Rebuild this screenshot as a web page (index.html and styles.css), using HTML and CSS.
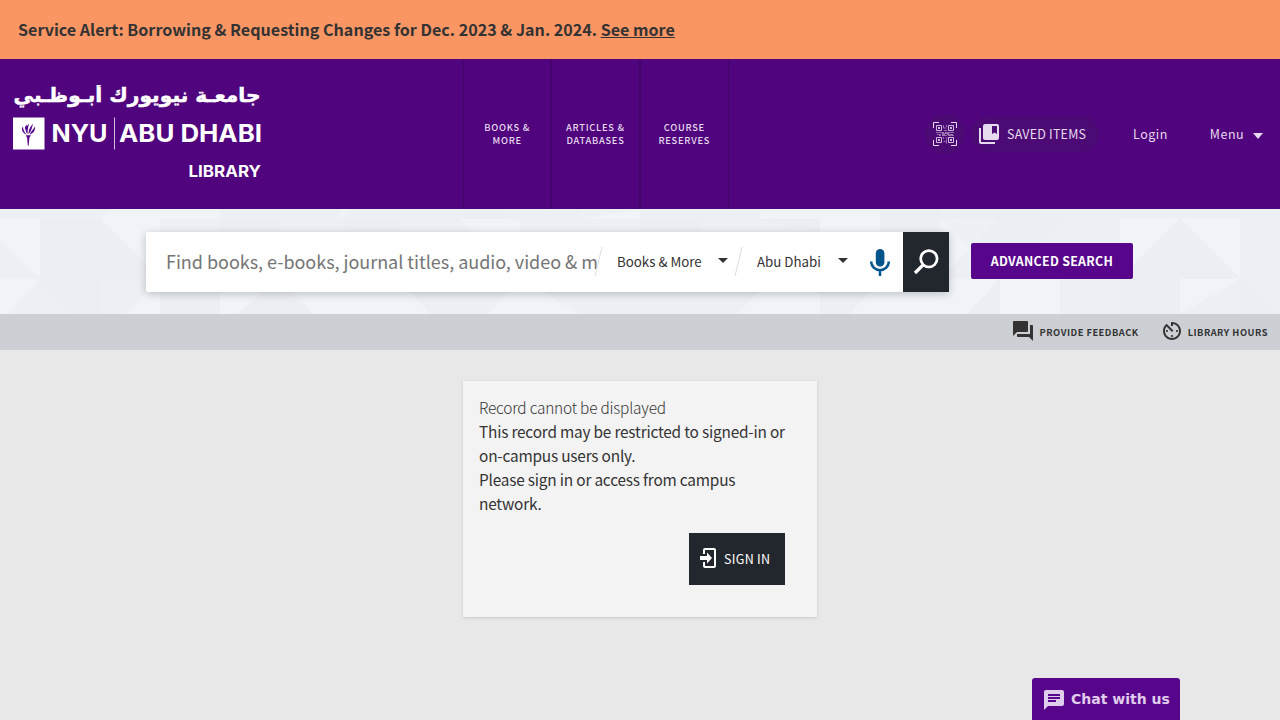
FILE: index.html
```html
<!DOCTYPE html>
<html lang="en">
<head>
<meta charset="utf-8">
<title>NYU Abu Dhabi Library</title>
<link rel="stylesheet" href="styles.css">
</head>
<body>
<div class="alert"><span>Service Alert: Borrowing &amp; Requesting Changes for Dec. 2023 &amp; Jan. 2024. <a href="#">See more</a></span></div>
<header class="header">
  <a class="logo" href="#">
    <svg width="254" height="94" viewBox="10 85 254 94" fill="#fff">
      <text class="logo-ar" x="13.500" y="101.500" textLength="247" lengthAdjust="spacingAndGlyphs">جامعـة نيويورك أبـوظـبي</text>
      <path d="M13 117.500h31.500v32H13z"/>
      <path d="M25.800 135.300h5.200l-1.600 2.500-.8 8h-.8l-.7-8z" fill="#57068c"/>
      <path d="M26.500 134.700c-5.500-3-5-6-3.500-8.500 0 4 1.500 5.500 3.500 8.500zM27.500 134.200c-3-4-2-7 1.500-10.500-1 4-1.500 6-1.500 10.500zM28.500 134.200c0-5 2-7.500 4.500-10.500-1 4-1.500 7-4.500 10.500zM29.700 134.700c1.300-4 3.800-5 5.300-8.500.5 4-1.500 7-5.300 8.500zM25 129c-.5-2 .5-3 2-4.500-.5 3-1 4 .5 8z" fill="#57068c"/>
      <text class="logo-en" x="51.500" y="142" textLength="56" lengthAdjust="spacingAndGlyphs">NYU</text>
      <path d="M114 117.500h1v32h-1z" opacity=".75"/>
      <text class="logo-en" x="119" y="142" textLength="143" lengthAdjust="spacingAndGlyphs">ABU DHABI</text>
      <text class="logo-lib" x="188.500" y="177" textLength="72.500" lengthAdjust="spacingAndGlyphs">LIBRARY</text>
    </svg>
  </a>
  <nav class="nav">
    <a href="#"><span>BOOKS &amp;<br>MORE</span></a>
    <a href="#"><span>ARTICLES &amp;<br>DATABASES</span></a>
    <a href="#"><span>COURSE<br>RESERVES</span></a>
  </nav>
  <div class="user">
    <a class="qr" href="#">
      <svg width="24" height="24" viewBox="0 0 24 24" fill="none" stroke="#e6daee">
        <path d="M.5 6V.5H6M18 .5h5.500V6M23.500 18v5.500H18M6 23.500H.5V18"/>
        <path d="M3.500 3.500h5v5h-5zM15.500 3.500h5v5h-5zM3.500 15.500h5v5h-5zM15.500 15.500h5v5h-5z" opacity=".85"/>
        <path d="M5 6h2M17 6h2M5 18h2M17 18h2" stroke-width="2" opacity=".85"/>
        <path d="M10.500 3v3h3M11 8.500h3M13.500 3v2M3 10.500h8m1 0h9M4 12.500h4m1 0h3m2 0h6M6 13.500h2m1 0h5m1 0h6M9 11.500h7M10.500 15v2m2-1h2m-4 3.500h2m1-2v4" opacity=".5"/>
      </svg>
    </a>
    <a class="saved" href="#">
      <svg width="20" height="20" viewBox="0 0 20 20" fill="#e6daee"><path fill-rule="evenodd" d="M0 4h2v14h14v2H2a2 2 0 0 1-2-2zM6 0h12a2 2 0 0 1 2 2v12a2 2 0 0 1-2 2H6a2 2 0 0 1-2-2V2a2 2 0 0 1 2-2zm7 2v8l2.500-1.500L18 10V2z"/></svg>
      <span>SAVED ITEMS</span>
    </a>
    <a class="login" href="#">Login</a>
    <a class="menu" href="#">Menu<svg width="10" height="6" viewBox="0 0 10 6" fill="#e6daee"><path d="M0 0h10L5 6z"/></svg></a>
  </div>
</header>
<section class="search">
  <svg class="pattern" width="1280" height="105" viewBox="0 0 1280 105">
    <path fill="#f0f3f8" d="M0 10h40v60L0 31zM100 10l60 60V10H220V0H110zM0 70h40L8 105H0zM125 105l35-35v35zM220 70h60l-42 35h-18zM280 70l33 35h117L400 70zM340 10h60V0h-60zM460 10l60 60V10zM487 105l33-35v35zM520 70l60 35h-60zM580 0h60v10h-60zM760 0h60v10h-60zM820 10h60v60h-60zM737 105l35-35h48v35zM850 105l30-35h60v35zM940 70h60l-33 35h-27zM820 0h60v10h-60zM940 10h60l-60 60zM1120 10h60l-60 60zM1180 10h60v60zM1180 70h60l-60 35zM1000 70h60v35h-60z"/>
    <path fill="#e9edf1" d="M40 10h60l60 60H40zM42 70h58v35H75zM160 70h60v35h-60zM220 10h60v13h-60zM238 105l31-28 44 28zM340 10l10-10h50v23h-47zM460 10h60L470 0zM580 0h60l-60 10zM640 10h60v13h-60zM760 10h60v13zM880 0h60v10l-60 60zM940 10l60-10 60 10-60 60zM1180 10l60 60h-120zM967 105l33-35v35zM1120 70h60v35h-60zM1240 70l35 35h-35z" opacity=".5"/>
  </svg>
  <div class="search-row">
    <div class="box">
      <div class="query">Find books, e-books, journal titles, audio, video &amp; m</div>
      <div class="select kind"><svg class="slash" width="9" height="29" viewBox="0 0 9 29"><path d="M8 0L1 29" stroke="#ddd" fill="none"/></svg><span>Books &amp; More</span><i></i></div>
      <div class="select place"><svg class="slash" width="9" height="29" viewBox="0 0 9 29"><path d="M8 0L1 29" stroke="#ddd" fill="none"/></svg><span>Abu Dhabi</span><i></i></div>
      <div class="mic"><svg width="20" height="27" viewBox="0 0 20 27"><rect x="5.800" y="0" width="8.600" height="17.500" rx="4.300" fill="#00558c"/><path d="M1.200 12.500c0 5 3.800 8.700 8.800 8.700s8.800-3.700 8.800-8.700M10 21v6" fill="none" stroke="#00558c" stroke-width="2.500"/></svg></div>
      <div class="go"><svg width="26" height="26" viewBox="0 0 26 26" fill="none" stroke="#fff"><circle cx="15.900" cy="9.800" r="8.200" stroke-width="2.700"/><path d="M10.100 15.900L2 24" stroke-width="3.300"/></svg></div>
    </div>
    <a class="advanced" href="#">ADVANCED SEARCH</a>
  </div>
</section>
<div class="tools">
  <a href="#"><svg width="20" height="20" viewBox="2 2 20 20" fill="#333"><path d="M21 6h-2v9H6v2c0 .55.45 1 1 1h11l4 4V7c0-.55-.45-1-1-1zm-4 6V3c0-.55-.45-1-1-1H3c-.55 0-1 .45-1 1v14l4-4h10c.55 0 1-.45 1-1z"/></svg><span class="feedback">PROVIDE FEEDBACK</span></a>
  <a href="#"><svg width="18" height="18" viewBox="3 3 18 18" fill="#333"><path d="M11 17c0 .55.45 1 1 1s1-.45 1-1-.45-1-1-1-1 .45-1 1zm0-14v4h2V5.080c3.390.49 6 3.390 6 6.920 0 3.870-3.130 7-7 7s-7-3.130-7-7c0-1.680.59-3.220 1.580-4.420L12 13l1.410-1.410-6.800-6.800v.02C4.420 6.450 3 9.050 3 12c0 4.970 4.020 9 9 9 4.970 0 9-4.030 9-9s-4.030-9-9-9h-1zm7 9c0-.55-.45-1-1-1s-1 .45-1 1 .45 1 1 1 1-.45 1-1zM6 12c0 .55.45 1 1 1s1-.45 1-1-.45-1-1-1-1 .45-1 1z"/></svg><span class="hours">LIBRARY HOURS</span></a>
</div>
<main class="main">
  <div class="card">
    <h1>Record cannot be displayed</h1>
    <p>This record may be restricted to signed-in or<br>on-campus users only.</p>
    <p>Please sign in or access from campus<br>network.</p>
    <a class="signin" href="#"><svg width="16" height="20" viewBox="0 0 16 20"><path d="M4 6V2a1 1 0 0 1 1-1h9a1 1 0 0 1 1 1v16a1 1 0 0 1-1 1H5a1 1 0 0 1-1-1v-4" fill="none" stroke="#fff" stroke-width="2"/><path d="M0 8h7V4.500l5 5.500-5 5.500V12H0z" fill="#fff"/></svg><span>SIGN IN</span></a>
  </div>
</main>
<a class="chat" href="#"><svg width="20" height="20" viewBox="2 2 20 20" fill="#e0cdeb"><path d="M20 2H4c-1.100 0-2 .9-2 2v18l4-4h14c1.100 0 2-.9 2-2V4c0-1.100-.9-2-2-2zM6 9h12v2H6V9zm8 5H6v-2h8v2zm4-6H6V6h12v2z"/></svg><span>Chat with us</span></a>
</body>
</html>
```
FILE: styles.css
```css
* { box-sizing: border-box; }
body { margin: 0; height: 720px; overflow: hidden; background: #e8e8e8; color: #333; font-family: "Noto Sans CJK SC", "Noto Sans", sans-serif; font-size: 16px; }
a { color: inherit; text-decoration: none; }
svg { display: block; flex: none; }
.alert { height: 59px; padding: 0 18px 2px; background: #fa9664; display: flex; align-items: center; font-size: 16.100px; font-weight: 700; line-height: 24px; white-space: nowrap; }
.alert a { text-decoration: underline; }
.header { height: 150px; background: #50047d; display: grid; grid-template-columns: 463px 266px 1fr; color: #e6daee; }
.logo { padding: 26px 0 0 10px; }
.logo-ar { font: 700 20px "DejaVu Sans", sans-serif; direction: rtl; text-anchor: end; stroke: #fff; stroke-width: .5px; }
.logo-en { font: 700 24.500px Inter, sans-serif; }
.logo-lib { font: 700 15.500px Inter, sans-serif; }
.nav { display: grid; grid-template-columns: repeat(3, 1fr); border-left: 1px solid #45036c; }
.nav a { display: flex; align-items: center; justify-content: center; text-align: center; border-right: 1px solid #45036c; font-size: 9.3px; font-weight: 500; line-height: 13px; letter-spacing: .75px; }
.nav a:not(:last-child) { border-right-width: 2px; }
.user { display: flex; align-items: center; font-size: 12.500px; letter-spacing: .5px; line-height: 20px; padding-left: 196px; white-space: nowrap; }
.qr { width: 40px; height: 40px; border-radius: 50%; background: #4c0a74; display: flex; align-items: center; justify-content: center; }
.saved { width: 128px; height: 36px; margin-left: 6px; padding-left: 8px; border-radius: 18px; background: #4c0a74; display: flex; align-items: center; gap: 8px; letter-spacing: .2px; }
.login { margin-left: 34px; }
.menu { margin-left: 42px; display: flex; align-items: center; gap: 9px; }
.menu svg { margin-top: 3px; }
.search { height: 105px; background: #eceff4; position: relative; }
.pattern { position: absolute; left: 0; top: 0; }
.search-row { position: relative; padding: 23px 0 0 146px; display: flex; gap: 22px; }
.box { width: 803px; height: 60px; background: #fff; display: flex; align-items: center; border-radius: 2px; box-shadow: 0 2px 8px rgba(0,0,0,.22); }
.query { width: 451px; padding: 0 0 2px 20px; white-space: nowrap; color: #757575; font-size: 18px; line-height: 30px; letter-spacing: -.03px; }
.select { position: relative; width: 140px; padding: 0 9px 0 20px; display: flex; align-items: center; justify-content: space-between; font-size: 13.300px; line-height: 20px; white-space: nowrap; }
.select i { border: 5px solid transparent; border-top-color: #333; border-bottom: 0; margin-top: -3px; }
.place { width: 120px; }
.slash { position: absolute; left: -3px; top: -5px; }
.mic { width: 46px; display: flex; justify-content: center; }
.go { width: 46px; height: 60px; background: #22272d; display: flex; align-items: center; justify-content: center; }
.advanced { width: 162px; height: 36px; margin-top: 11px; padding-bottom: 1px; border-radius: 2px; background: #57068c; color: #fff; font-size: 12.400px; font-weight: 700; letter-spacing: .3px; display: flex; align-items: center; justify-content: center; white-space: nowrap; }
.tools { height: 36px; background: #cccfd4; display: flex; align-items: center; justify-content: flex-end; padding-right: 12px; gap: 24px; font-size: 9.300px; font-weight: 700; letter-spacing: .5px; }
.tools a { display: flex; align-items: center; gap: 7px; white-space: nowrap; }
.tools svg { margin-top: -2px; }
.main { display: flex; justify-content: center; padding-top: 31px; }
.card { width: 354px; height: 236px; padding: 14px 16px; background: #f3f3f3; box-shadow: 0 1px 3px rgba(0,0,0,.15); display: flex; flex-direction: column; white-space: nowrap; line-height: 24px; }
.card h1, .card p { margin: 0; font-size: 15.400px; font-weight: 400; letter-spacing: -.2px; }
.card h1 { font-weight: 200; }
.signin { align-self: flex-end; margin: 18px 16px 0 0; width: 96px; height: 52px; background: #22272d; color: #fff; display: flex; align-items: center; padding-left: 11px; gap: 8px; font-size: 12.500px; letter-spacing: .3px; }
.signin svg { margin-top: -2px; }
.chat { position: fixed; left: 1032px; bottom: 0; width: 148px; height: 42px; padding-left: 12px; display: flex; align-items: center; gap: 7px; background: #57068c; color: #e0cdeb; border-radius: 3px 3px 0 0; font: 700 14px "DejaVu Sans", sans-serif; white-space: nowrap; }
.chat svg { margin-top: 2px; }
```
